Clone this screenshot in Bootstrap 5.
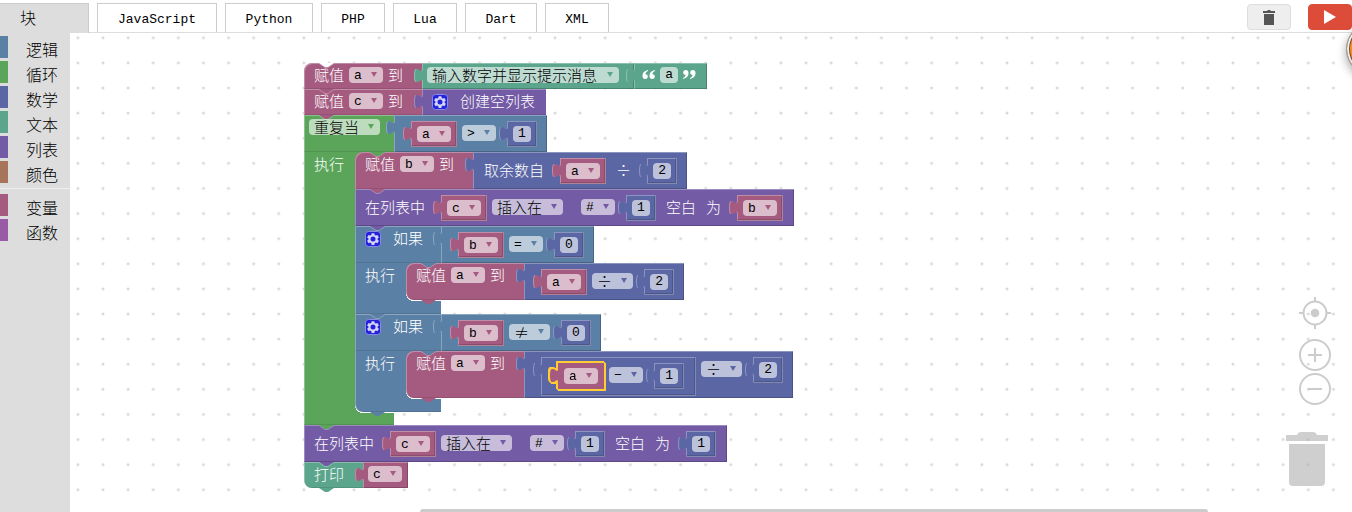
<!DOCTYPE html>
<html lang="zh-CN">
<head>
<meta charset="utf-8">
<meta name="viewport" content="width=device-width, initial-scale=1">
<title>Blockly 代码</title>
<link href="https://cdn.jsdelivr.net/npm/bootstrap@5.3.0/dist/css/bootstrap.min.css" rel="stylesheet">
<script src="https://cdn.jsdelivr.net/npm/bootstrap@5.3.0/dist/js/bootstrap.bundle.min.js"></script>
<style>
  body { font-family: "Liberation Mono", "Noto Sans CJK SC", monospace; font-size: 13px; font-weight: 300; line-height: 16px; color: #000; background: #fff; }
  button, select, input { font-weight: 300; }

  /* language tabs */
  .top-bar { height: 33px; padding-top: 3px; border-bottom: 1px solid #ddd; }
  .lang-tab { height: 29px; width: 64px; border: 1px solid #ccc; border-bottom: 0; background: #fff; color: #000; padding: 3px 0 0; font-size: 13px; border-radius: 0; }
  .lang-tab.w-lg { width: 120px; }
  .lang-tab.w-md { width: 88px; }
  .lang-tab.w-dart { width: 72px; }
  .lang-tab.current { width: 89px; height: 30px; padding: 2px 0 0 20px; font-size: 16px; text-align: left; background: #ddd; border-left: 0; margin-bottom: -1px; }
  .run-group { gap: 17px; }
  .tool-btn { width: 44px; height: 26px; padding: 0; margin-top: 1px; background: #eee; border: 1px solid #ddd; border-radius: 4px; line-height: 0; }
  .tool-btn.run { background: #dd4b39; border-color: #dd4b39; }

  /* category list */
  .toolbox { width: 70px; background: #ddd; padding-top: 3px; }
  .toolbox a { display: block; height: 22px; margin-bottom: 3px; padding: 5px 0 0 18px; border-left: 8px solid var(--c); font-size: 16px; line-height: 22px; color: #000; text-decoration: none; white-space: nowrap; }
  .toolbox hr { margin: 5px 0; border: 0; height: 1px; background: #eee; opacity: 1; }

  .logic { --c: #5b80a5; }
  .loops { --c: #5ba55b; }
  .maths { --c: #5b67a5; }
  .texts { --c: #5ba58c; }
  .lists { --c: #745ba5; }
  .colour { --c: #a5745b; }
  .vars { --c: #a55b80; }
  .procs { --c: #995ba5; }

  /* workspace */
  .workspace { overflow: hidden; }
  .dots { z-index: 0; }
  .program { padding: 30px 0 0 234px; z-index: 1; }
  .stmt { position: relative; display: flex; width: max-content; color: #fff; font-size: 15px; }
  .stmt > .part { background: var(--c); box-shadow: inset 1px 1px rgba(255,255,255,.3), inset 0 -1px rgba(0,0,0,.1); }
  .part, .val, .plug { display: flex; align-items: flex-start; gap: 5px; }
  .part { padding: 4px 19px 0 10px; min-height: 26px; }
  .part.gap-icon { gap: 12px; }
  .part.sock { padding: 6px 11px 2px 10px; min-height: 37px; box-shadow: inset 1px 1px rgba(255,255,255,.3), inset -1px -1px rgba(0,0,0,.2); }
  .lbl { white-space: pre; line-height: 16px; font-family: "Noto Sans CJK SC", sans-serif; }
  .lbl + .lbl, .plug + .lbl { margin-left: 5px; }
  .sock > .lbl, .sock > .fld { margin-top: 4px; }
  .sock > .lbl.lead-in { margin-left: 11px; }

  .round-top > .part:first-child { border-top-left-radius: 8px; }
  .round-end > .part:first-child { border-bottom-left-radius: 8px; }
  .c-body > .round-top { background: linear-gradient(var(--above), var(--above)) 0 0 / 8px 8px no-repeat; }

  /* notch on the upper edge, filled with the colour above it */
  .stmt::before, .stmt::after, .bump { content: ""; position: absolute; left: 15px; width: 15px; height: 4px; clip-path: polygon(0 0, 100% 0, 60% 100%, 40% 100%); }
  .stmt::before { top: 1px; background: rgba(255,255,255,.3); z-index: 1; }
  .stmt::after { top: 0; background: var(--above, #fff); z-index: 2; }
  .bump { bottom: -4px; background: var(--c); z-index: 3; }
  .under-vars { --above: #a55b80; }
  .under-loops { --above: #5ba55b; }
  .under-lists { --above: #745ba5; }
  .under-logic { --above: #5b80a5; }

  /* value blocks and their puzzle tabs */
  .val, .plug { position: relative; background: var(--c); box-shadow: inset 1px 1px rgba(255,255,255,.3), inset -1px -1px rgba(0,0,0,.2); }
  .val { padding: 4px 11px 0 10px; }
  .val.sock { padding: 6px 10px 2px 0; min-height: 37px; }
  .val::before, .val::after, .plug::before, .plug::after { content: ""; position: absolute; top: 5px; left: -8px; width: 9px; height: 15px; clip-path: path("M8 0C8 10 0 -8 0 7.5S8 5 8 15H9V0z"); background: linear-gradient(rgba(255,255,255,.3), rgba(255,255,255,.3)), var(--c); }
  .val::after, .plug::after { left: -7px; background: var(--c); }
  .plug { padding: 5px 6px; min-height: 26px; margin-left: 6px; box-shadow: inset 0 0 0 1px rgba(255,255,255,.3), inset -2px -2px rgba(0,0,0,.15); }
  .lbl + .plug { margin-left: 11px; }
  .val > .plug:first-child, .plug > .plug:first-child { margin-left: 17px; }
  .plug.sock { padding: 6px 12px 7px 0; }
  .plug.picked { box-shadow: none; filter: drop-shadow(1px 0 #fc3) drop-shadow(-1px 0 #fc3) drop-shadow(0 1px #fc3) drop-shadow(0 -1px #fc3) drop-shadow(1px 1px #fc3) drop-shadow(-1px -1px #fc3); }
  .plug.picked::before { background: var(--c); }
  .prompt-val { padding: 4px 15px 0 5px; }
  .name-val { padding: 4px 6px 0 5px; }
  .quote-val { padding: 4px 11px 0 8px; gap: 4px; }
  .quote-val svg { width: 14px; height: 16px; }

  /* fields */
  .fld { position: relative; display: block; height: 16px; width: 34px; }
  .fld.wide { width: 71px; }
  .fld.mid { width: 41px; }
  .fld.long { width: 192px; }
  .sock > .fld.hash { margin-left: 13px; }
  .fld::after { content: ""; position: absolute; right: 6px; top: 5px; width: 6px; height: 5px; background: var(--c); clip-path: polygon(0 0, 100% 0, 50% 100%); pointer-events: none; }
  .fld select, .num { display: block; width: 100%; height: 16px; border: 0; border-radius: 4px; background: rgba(255,255,255,.6); color: #000; font-size: 13px; line-height: 16px; }
  .fld select { appearance: none; padding: 1px 0 0 5px; }
  .fld.zh select { font-family: "Noto Sans CJK SC", sans-serif; font-size: 15px; padding-top: 0; }
  .num { width: 18px; padding: 0; text-align: center; }
  .gear { width: 16px; height: 16px; padding: 0; margin-top: 1px; border: 0; background: none; line-height: 0; }

  /* C-shaped blocks */
  .cshape { position: relative; width: max-content; color: #fff; font-size: 15px; }
  .cshape > .stmt > .part { width: 86px; padding-right: 0; }
  .cshape.loops > .stmt > .part { width: 90px; padding-left: 5px; }
  .c-mid { display: flex; }
  .c-bar { width: 51px; padding: 4px 0 0 10px; background: var(--c); box-shadow: inset 1px 0 rgba(255,255,255,.3); position: relative; }
  .c-bar::after { content: ""; position: absolute; left: 51px; bottom: 0; width: 8px; height: 8px; background: radial-gradient(circle at 100% 0, transparent 8px, var(--c) 8px); }
  .c-body { padding-bottom: 1px; position: relative; }
  .c-arm { width: 86px; height: 12px; background: var(--c); box-shadow: inset 1px 0 rgba(255,255,255,.3), inset 0 -1px rgba(0,0,0,.1); }
  .c-arm.tall { height: 13px; }
  .cshape.loops > .c-arm { width: 90px; }
  .c-arm.soft { border-bottom-left-radius: 8px; }

  /* floating controls */
  .canvas-ctl { right: 20px; top: 263px; z-index: 3; width: 46px; }
  .canvas-ctl button { display: block; border: 0; background: none; padding: 0; line-height: 0; }
  .scroll-thumb { left: 27.3%; right: 11.2%; bottom: -3px; height: 6px; border-radius: 3px; background: #ccc; z-index: 2; }
  .float-ball { position: absolute; right: -48px; top: 22px; width: 54px; height: 54px; padding: 0; border: 1px solid #999; border-radius: 50%; background: #ff8c1a; box-shadow: inset 0 0 0 2px #eee, inset 0 0 0 3px #6b4a2a, 0 4px 10px rgba(0,0,0,.35); z-index: 5; }
</style>
</head>
<body class="vh-100 overflow-hidden position-relative d-flex flex-column">

<svg width="0" height="0" class="position-absolute" aria-hidden="true">
  <symbol id="gear" viewBox="0 0 16 16">
    <rect x=".5" y=".5" width="15" height="15" rx="3" fill="#22d" stroke="#8a8ae8"/>
    <path fill="#d4d4f4" d="M6.600 2.200h2.800l.3 1.700 1.200.7 1.600-.6 1.400 2.400-1.300 1.100v1.200l1.300 1.100-1.400 2.400-1.600-.6-1.200.7-.3 1.700H6.600l-.3-1.700-1.200-.7-1.600.6-1.400-2.400 1.300-1.100V7.500L2.100 6.400 3.500 4l1.600.6 1.200-.7z"/>
    <circle cx="8" cy="8.100" r="2.500" fill="#22d"/>
  </symbol>
</svg>

<header class="top-bar d-flex align-items-start flex-shrink-0">
  <div class="d-flex gap-2" role="tablist">
    <button class="lang-tab current" role="tab" aria-selected="true">块</button>
    <button class="lang-tab w-lg" role="tab">JavaScript</button>
    <button class="lang-tab w-md" role="tab">Python</button>
    <button class="lang-tab" role="tab">PHP</button>
    <button class="lang-tab" role="tab">Lua</button>
    <button class="lang-tab w-dart" role="tab">Dart</button>
    <button class="lang-tab" role="tab">XML</button>
  </div>
  <div class="run-group d-flex ms-auto">
    <button class="tool-btn" aria-label="清空"><svg width="12" height="15" viewBox="0 0 12 15" fill="#555"><path d="M0 1h4l1-1h2l1 1h4v2H0zM1 4h10v11H1z"/></svg></button>
    <button class="tool-btn run" aria-label="运行"><svg width="14" height="16" viewBox="0 0 14 16"><path fill="#fff" d="M1 1l12 7-12 7z"/></svg></button>
  </div>
</header>

<div class="d-flex flex-grow-1">
  <nav class="toolbox flex-shrink-0">
    <a href="#" class="logic">逻辑</a>
    <a href="#" class="loops">循环</a>
    <a href="#" class="maths">数学</a>
    <a href="#" class="texts">文本</a>
    <a href="#" class="lists">列表</a>
    <a href="#" class="colour">颜色</a>
    <hr>
    <a href="#" class="vars">变量</a>
    <a href="#" class="procs">函数</a>
  </nav>

  <main class="workspace position-relative flex-grow-1">
    <svg class="dots position-absolute top-0 start-0 w-100 h-100" aria-hidden="true">
      <defs><pattern id="grid" width="25.11" height="25.11" patternUnits="userSpaceOnUse" patternTransform="translate(-4.6 -7.8)"><circle cx="12.5" cy="12.5" r="1.5" fill="#d8d8d8"/></pattern></defs>
      <rect width="100%" height="100%" fill="url(#grid)"/>
    </svg>

    <div class="program position-relative">

      <div class="stmt vars round-top">
        <div class="part"><span class="lbl">赋值</span><span class="fld"><select aria-label="变量"><option>a</option></select></span><span class="lbl">到</span></div>
        <div class="val texts prompt-val"><span class="fld long zh"><select aria-label="输入类型"><option>输入数字并显示提示消息</option></select></span></div>
        <div class="val texts quote-val">
          <svg viewBox="0 0 14 16" fill="#fff"><path id="q" d="M6 3C2 4 .5 6 .5 9c0 2 1 3 2.700 3S5.800 11 5.800 9.500 4.800 7.200 3.500 7.200C3.500 5.500 4.500 4.500 6 4zM13 3C9 4 7.500 6 7.500 9c0 2 1 3 2.700 3s2.600-1 2.600-2.500-1-2.300-2.300-2.300c0-1.700 1-2.700 2.500-3.200z"/></svg>
          <input class="num" aria-label="提示" value="a">
          <svg viewBox="0 0 14 16"><use href="#q" fill="#fff" transform="rotate(180 7 7.500)"/></svg>
        </div>
      </div>

      <div class="stmt vars under-vars">
        <div class="part"><span class="lbl">赋值</span><span class="fld"><select aria-label="变量"><option>c</option></select></span><span class="lbl">到</span></div>
        <div class="val lists part gap-icon"><button class="gear" aria-label="设置"><svg width="16" height="16"><use href="#gear"/></svg></button><span class="lbl">创建空列表</span></div>
      </div>

      <div class="cshape loops">
        <div class="stmt under-vars">
          <div class="part"><span class="fld wide zh"><select aria-label="循环方式"><option>重复当</option></select></span></div>
          <div class="val logic sock">
            <div class="plug vars"><span class="fld"><select aria-label="变量"><option>a</option></select></span></div>
            <span class="fld"><select aria-label="比较"><option>&gt;</option></select></span>
            <div class="plug maths"><input class="num" aria-label="数字" value="1"></div>
          </div>
        </div>
        <div class="c-mid">
          <div class="c-bar"><span class="lbl">执行</span></div>
          <div class="c-body">

            <div class="stmt vars under-loops round-top">
              <div class="part"><span class="lbl">赋值</span><span class="fld"><select aria-label="变量"><option>b</option></select></span><span class="lbl">到</span></div>
              <div class="val maths sock"><span class="lbl lead-in">取余数自</span>
                <div class="plug vars"><span class="fld"><select aria-label="变量"><option>a</option></select></span></div>
                <span class="lbl">÷</span>
                <div class="plug maths"><input class="num" aria-label="数字" value="2"></div>
              </div>
            </div>

            <div class="stmt lists under-vars">
              <div class="part sock"><span class="lbl">在列表中</span>
                <div class="plug vars"><span class="fld"><select aria-label="变量"><option>c</option></select></span></div>
                <span class="fld wide zh"><select aria-label="操作"><option>插入在</option></select></span>
                <span class="fld hash"><select aria-label="位置"><option>#</option></select></span>
                <div class="plug maths"><input class="num" aria-label="数字" value="1"></div>
                <span class="lbl">空白</span><span class="lbl">为</span>
                <div class="plug vars"><span class="fld"><select aria-label="变量"><option>b</option></select></span></div>
              </div>
            </div>

            <div class="cshape logic">
              <div class="stmt under-lists">
                <div class="part gap-icon"><button class="gear" aria-label="设置"><svg width="16" height="16"><use href="#gear"/></svg></button><span class="lbl">如果</span></div>
                <div class="val logic sock">
                  <div class="plug vars"><span class="fld"><select aria-label="变量"><option>b</option></select></span></div>
                  <span class="fld"><select aria-label="比较"><option>=</option></select></span>
                  <div class="plug maths"><input class="num" aria-label="数字" value="0"></div>
                </div>
              </div>
              <div class="c-mid">
                <div class="c-bar"><span class="lbl">执行</span></div>
                <div class="c-body">
                  <div class="stmt vars under-logic round-top round-end">
                    <div class="part"><span class="lbl">赋值</span><span class="fld"><select aria-label="变量"><option>a</option></select></span><span class="lbl">到</span></div>
                    <div class="val maths sock">
                      <div class="plug vars"><span class="fld"><select aria-label="变量"><option>a</option></select></span></div>
                      <span class="fld mid zh"><select aria-label="运算"><option>÷</option></select></span>
                      <div class="plug maths"><input class="num" aria-label="数字" value="2"></div>
                    </div>
                    <i class="bump"></i>
                  </div>
                </div>
              </div>
              <div class="c-arm tall"></div>
            </div>

            <div class="cshape logic">
              <div class="stmt under-logic">
                <div class="part gap-icon"><button class="gear" aria-label="设置"><svg width="16" height="16"><use href="#gear"/></svg></button><span class="lbl">如果</span></div>
                <div class="val logic sock">
                  <div class="plug vars"><span class="fld"><select aria-label="变量"><option>b</option></select></span></div>
                  <span class="fld mid zh"><select aria-label="比较"><option>≠</option></select></span>
                  <div class="plug maths"><input class="num" aria-label="数字" value="0"></div>
                </div>
              </div>
              <div class="c-mid">
                <div class="c-bar"><span class="lbl">执行</span></div>
                <div class="c-body">
                  <div class="stmt vars under-logic round-top round-end">
                    <div class="part"><span class="lbl">赋值</span><span class="fld"><select aria-label="变量"><option>a</option></select></span><span class="lbl">到</span></div>
                    <div class="val maths sock">
                      <div class="plug maths sock">
                        <div class="plug vars picked"><span class="fld"><select aria-label="变量"><option>a</option></select></span></div>
                        <span class="fld"><select aria-label="运算"><option>−</option></select></span>
                        <div class="plug maths"><input class="num" aria-label="数字" value="1"></div>
                      </div>
                      <span class="fld mid zh"><select aria-label="运算"><option>÷</option></select></span>
                      <div class="plug maths"><input class="num" aria-label="数字" value="2"></div>
                    </div>
                    <i class="bump"></i>
                  </div>
                </div>
              </div>
              <div class="c-arm tall soft"></div>
              <i class="bump"></i>
            </div>

          </div>
        </div>
        <div class="c-arm"></div>
      </div>

      <div class="stmt lists under-loops">
        <div class="part sock"><span class="lbl">在列表中</span>
          <div class="plug vars"><span class="fld"><select aria-label="变量"><option>c</option></select></span></div>
          <span class="fld wide zh"><select aria-label="操作"><option>插入在</option></select></span>
          <span class="fld hash"><select aria-label="位置"><option>#</option></select></span>
          <div class="plug maths"><input class="num" aria-label="数字" value="1"></div>
          <span class="lbl">空白</span><span class="lbl">为</span>
          <div class="plug maths"><input class="num" aria-label="数字" value="1"></div>
        </div>
      </div>

      <div class="stmt texts under-lists round-end">
        <div class="part"><span class="lbl">打印</span></div>
        <div class="val vars name-val"><span class="fld"><select aria-label="变量"><option>c</option></select></span></div>
        <i class="bump"></i>
      </div>
    </div>

    <div class="canvas-ctl position-absolute d-flex flex-column align-items-end">
      <button aria-label="居中"><svg width="34" height="34" viewBox="-17 -17 34 34" fill="none" stroke="#ccc" stroke-width="2"><circle r="11.500"/><circle r="4.300" fill="#ccc" stroke="none"/><path d="M0-16v5M0 16v-5M-16 0h5M16 0h-5"/></svg></button>
      <button class="mt-2" aria-label="放大"><svg width="34" height="34" viewBox="-17 -17 34 34" fill="none" stroke="#ccc" stroke-width="2"><circle r="15"/><path d="M-7 0H7M0-7V7"/></svg></button>
      <button aria-label="缩小"><svg width="34" height="34" viewBox="-17 -17 34 34" fill="none" stroke="#ccc" stroke-width="2"><circle r="15"/><path d="M-7 0H7"/></svg></button>
      <button class="align-self-start mt-4" aria-label="回收站"><svg width="42" height="56" viewBox="0 -1 42 56" fill="#aaa" fill-opacity=".57"><path d="M0 4h11q1-3 4-3h12q3 0 4 3h11v6H0zM3 13h36v38q0 4-4 4H7q-4 0-4-4z"/></svg></button>
    </div>
    <div class="scroll-thumb position-absolute"></div>
  </main>
</div>
<button class="float-ball" aria-label="助手"></button>
</body>
</html>
